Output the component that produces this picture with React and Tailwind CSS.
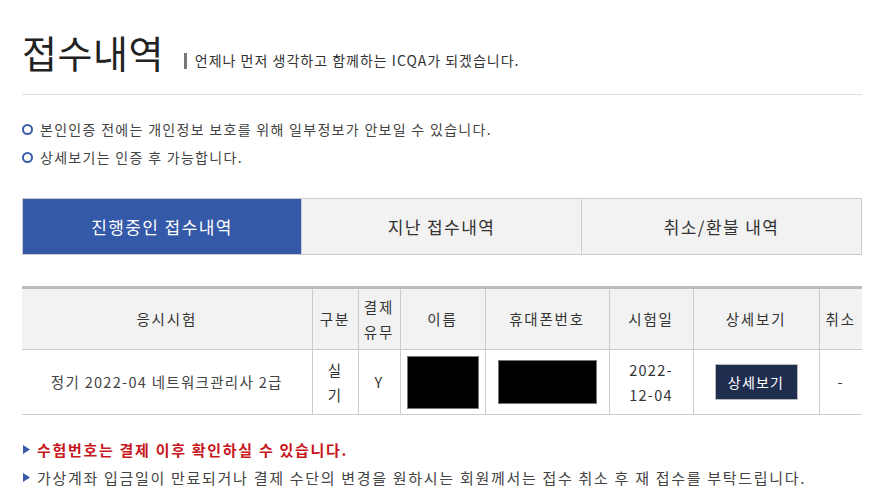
const font = { fontFamily: '"Noto Sans CJK KR", "Noto Sans", sans-serif' }

function Circle() {
  return <span className="inline-block h-[11px] w-[11px] shrink-0 rounded-full border-2 border-[#3a5ca8]" />
}

function Tri() {
  return (
    <svg width="7" height="9" viewBox="0 0 7 9" className="shrink-0">
      <path d="M0 0 L7 4.5 L0 9 Z" fill="#3a5ca8" />
    </svg>
  )
}

export default function App() {
  const tabs = ['진행중인 접수내역', '지난 접수내역', '취소/환불 내역']
  return (
    <div className="min-h-screen bg-white text-[#333]" style={font}>
      <div className="ml-[22px] w-[840px] pt-[30px]">
        {/* 제목 */}
        <div className="flex items-end border-b border-[#ddd] pb-[20px]">
          <h1 className="text-[38px] font-normal leading-[44px] tracking-[0.5px] text-[#222]">접수내역</h1>
          <p className="mb-[3px] ml-[20px] flex items-center text-[14px] tracking-[1px] text-[#333]">
            <span className="mr-[8px] inline-block h-[16px] w-[3px] bg-[#777]" />
            언제나 먼저 생각하고 함께하는 ICQA가 되겠습니다.
          </p>
        </div>

        {/* 안내 */}
        <ul className="mt-[25px] space-y-[9px] text-[14px] tracking-[1.3px] text-[#444]">
          <li className="flex items-center gap-[7px] leading-[19px]">
            <Circle />
            본인인증 전에는 개인정보 보호를 위해 일부정보가 안보일 수 있습니다.
          </li>
          <li className="flex items-center gap-[7px] leading-[19px]">
            <Circle />
            상세보기는 인증 후 가능합니다.
          </li>
        </ul>

        {/* 탭 */}
        <div className="mt-[31px] grid h-[57px] grid-cols-[278px_280px_1fr] border border-[#ccc]">
          {tabs.map((t, i) => (
            <div
              key={t}
              className={
                i === 0
                  ? 'flex items-center justify-center bg-[#3359a8] text-[17px] tracking-[1.4px] text-white'
                  : 'flex items-center justify-center border-l border-[#ccc] bg-[#f2f2f2] text-[17px] tracking-[1.4px] text-[#333]'
              }
            >
              {t}
            </div>
          ))}
        </div>

        {/* 표 */}
        <table className="mt-[31px] w-full table-fixed border-collapse border-t-[3px] border-t-[#bbb] text-[14.5px] tracking-[1.3px] text-[#333]">
          <colgroup>
            <col className="w-[290px]" />
            <col className="w-[46px]" />
            <col className="w-[42px]" />
            <col className="w-[85px]" />
            <col className="w-[124px]" />
            <col className="w-[84px]" />
            <col className="w-[126px]" />
            <col />
          </colgroup>
          <thead>
            <tr className="h-[62px] bg-[#f2f2f2] tracking-[1.8px]">
              <th className="font-normal">응시시험</th>
              <th className="border-l border-[#ccc] font-normal">구분</th>
              <th className="border-l border-[#ccc] font-normal leading-[25px]">
                결제
                <br />
                유무
              </th>
              <th className="border-l border-[#ccc] font-normal">이름</th>
              <th className="border-l border-[#ccc] font-normal">휴대폰번호</th>
              <th className="border-l border-[#ccc] font-normal">시험일</th>
              <th className="border-l border-[#ccc] font-normal">상세보기</th>
              <th className="border-l border-[#ccc] font-normal">취소</th>
            </tr>
          </thead>
          <tbody>
            <tr className="h-[65px] border-y border-[#ccc] text-center">
              <td className="text-[#444]">정기 2022-04 네트워크관리사 2급</td>
              <td className="border-l border-[#ccc] leading-[25px]">
                실
                <br />
                기
              </td>
              <td className="border-l border-[#ccc]">Y</td>
              <td className="border-l border-[#ccc]">
                <div className="mx-auto h-[53px] w-[72px] border border-[#777] bg-black" />
              </td>
              <td className="border-l border-[#ccc]">
                <div className="mx-auto h-[44px] w-[99px] border border-[#777] bg-black" />
              </td>
              <td className="border-l border-[#ccc] leading-[25px]">
                2022-
                <br />
                12-04
              </td>
              <td className="border-l border-[#ccc]">
                <button className="h-[36px] w-[83px] border border-[#bbb] bg-[#1f2d4f] text-[14px] tracking-[1.2px] text-white">
                  상세보기
                </button>
              </td>
              <td className="border-l border-[#ccc]">-</td>
            </tr>
          </tbody>
        </table>

        {/* 하단 안내 */}
        <ul className="mt-[25px] space-y-[9px] pl-[1px] text-[15px] tracking-[1.7px]">
          <li className="flex items-center gap-[7px] font-bold leading-[19px] text-[#c8161d]">
            <Tri />
            수험번호는 결제 이후 확인하실 수 있습니다.
          </li>
          <li className="flex items-center gap-[7px] leading-[19px] text-[#444]">
            <Tri />
            가상계좌 입금일이 만료되거나 결제 수단의 변경을 원하시는 회원께서는 접수 취소 후 재 접수를 부탁드립니다.
          </li>
        </ul>
      </div>
    </div>
  )
}
